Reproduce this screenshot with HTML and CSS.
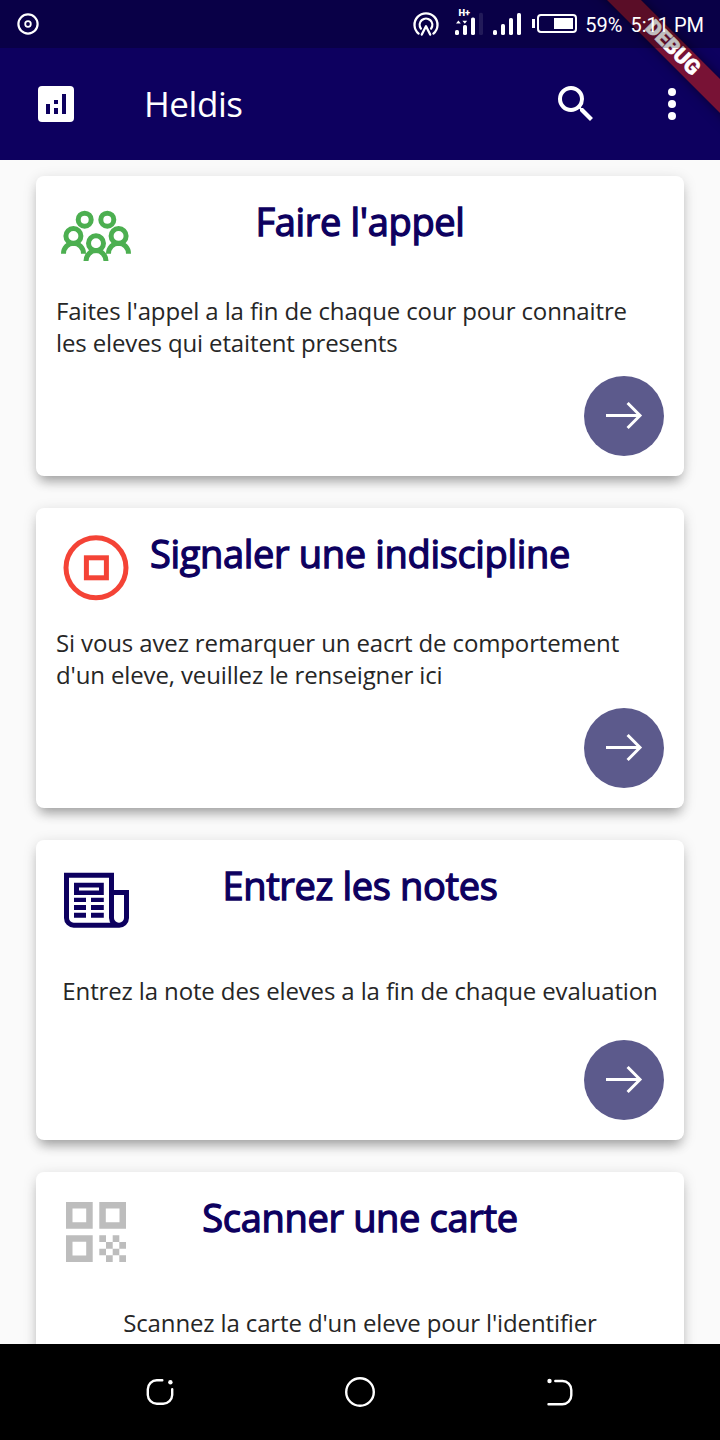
FILE: index.html
```html
<!DOCTYPE html>
<html lang="fr">
<head>
<meta charset="utf-8">
<title>Heldis</title>
<link rel="stylesheet" href="styles.css">
</head>
<body>
<div class="screen">
  <header class="top">
    <div class="debug"><span>DEBUG</span></div>
    <div class="status">
      <svg class="status-app" width="24" height="24" viewBox="0 0 24 24" fill="none" stroke="#fff"><circle cx="12" cy="12" r="9.6" stroke-width="2.2"/><circle cx="12" cy="12" r="2.8" stroke-width="1.8"/></svg>
      <div class="status-right">
        <svg width="180" height="48" viewBox="400 0 180 48">
          <g fill="none" stroke="#fff" stroke-width="2.3" stroke-linecap="round">
            <path d="M418.6 33.6A11.5 11.5 0 1 1 433.4 33.6"/>
            <path d="M420.9 28.6A6.3 6.3 0 1 1 431.1 28.6"/>
            <path d="M421.8 34.6L426 26.2L430.2 34.6" stroke-linejoin="round"/>
          </g>
          <text class="net" x="458.4" y="15.6" textLength="11.6" lengthAdjust="spacingAndGlyphs">H+</text>
          <g fill="#fff">
            <path d="M456 23.5L458.4 20.5L460.8 23.5ZM462.4 20.8H467.2L464.8 23.8Z"/>
            <rect x="455" y="30" width="4" height="5" rx="1.6"/>
            <rect x="463" y="25" width="4" height="10" rx="1.6"/>
            <rect x="471" y="17.6" width="4" height="17.4" rx="1.6"/>
            <rect x="479" y="12.8" width="4" height="22.2" rx="1.6" opacity=".1"/>
            <rect x="493" y="30" width="4" height="5" rx="1.6"/>
            <rect x="501" y="24" width="4" height="11" rx="1.6"/>
            <rect x="509" y="18" width="4" height="17" rx="1.6"/>
            <rect x="517" y="13" width="4" height="22" rx="1.6"/>
            <rect x="532" y="19" width="3" height="9"/>
            <rect x="554" y="18" width="19" height="11"/>
          </g>
          <rect x="538" y="15" width="38" height="17" rx="3" fill="none" stroke="#fff" stroke-width="2"/>
        </svg>
        <span class="battery">59%</span>
        <span class="time">5:11 PM</span>
      </div>
    </div>
    <div class="appbar">
      <svg width="36" height="36" viewBox="0 0 36 36"><rect width="36" height="36" rx="4" fill="#fff"/><path fill="#0d005f" d="M8 18h4v10H8zM16 14h4v4h-4zM16 22h4v6h-4zM24 8h4v20h-4z"/></svg>
      <h1>Heldis</h1>
      <svg class="search" width="48" height="48" viewBox="0 0 24 24" fill="#fff"><path d="M15.5 14h-.79l-.28-.27A6.47 6.47 0 0 0 16 9.5 6.5 6.5 0 1 0 9.5 16c1.61 0 3.09-.59 4.23-1.57l.27.28v.79l5 4.99L20.49 19l-4.99-5zm-6 0C7.01 14 5 11.99 5 9.5S7.01 5 9.5 5 14 7.01 14 9.5 11.99 14 9.5 14z"/></svg>
      <svg width="48" height="48" viewBox="0 0 48 48" fill="#fff"><circle cx="24" cy="12" r="4"/><circle cx="24" cy="24" r="4"/><circle cx="24" cy="36" r="4"/></svg>
    </div>
  </header>

  <main class="list">
    <section class="card">
      <div class="head">
        <svg class="icon" viewBox="0 0 72 72" fill="none" stroke="#4caf50" stroke-width="5">
          <circle cx="24.7" cy="19.7" r="6.5"/><circle cx="47.3" cy="19.7" r="6.5"/>
          <circle cx="13.4" cy="36" r="7.5"/><circle cx="58.6" cy="36" r="7.5"/><circle cx="36" cy="43.3" r="7.5"/>
          <path d="M3.5 53.7a10 10.4 0 0 1 20 0M48.5 53.7a10 10.4 0 0 1 20 0M26 61a10 10.4 0 0 1 20 0"/>
        </svg>
        <h2>Faire l'appel</h2>
      </div>
      <div class="body"><p class="wide">Faites l'appel a la fin de chaque cour pour connaitre<br>les eleves qui etaitent presents</p></div>
      <div class="foot"><span class="go"><svg width="40" height="40" viewBox="0 0 40 40"><path d="M2 19.5H36M23.6 7L36 19.5L23.6 32"/></svg></span></div>
    </section>

    <section class="card">
      <div class="head">
        <svg class="icon" viewBox="0 0 72 72" fill="none" stroke="#f44336" stroke-width="5"><circle cx="36" cy="35.8" r="30"/><rect x="26.4" y="25.8" width="20" height="20"/></svg>
        <h2>Signaler une indiscipline</h2>
      </div>
      <div class="body"><p class="wide">Si vous avez remarquer un eacrt de comportement<br>d'un eleve, veuillez le renseigner ici</p></div>
      <div class="foot"><span class="go"><svg width="40" height="40" viewBox="0 0 40 40"><path d="M2 19.5H36M23.6 7L36 19.5L23.6 32"/></svg></span></div>
    </section>

    <section class="card">
      <div class="head">
        <svg class="icon" viewBox="0 0 72 72" fill="none" stroke="#0d005f" stroke-width="5">
          <path d="M51.5 28.5H66.5V54a7.3 7.3 0 0 1-7.5 7.2a7.3 7.3 0 0 1-7.5-7.2V11.2H6.5V54a7.2 7.2 0 0 0 7.2 7.2H59"/>
          <path fill="#0d005f" fill-rule="evenodd" stroke="none" d="M14 18.7H43.8V31H14zM19 23.4V26.4H39V23.4zM14 33.7H26V38H14zM31 33.7H43.8V38H31zM14 41.1H26V46H14zM31 41.1H43.8V46H31zM14 48.8H26V53.7H14zM31 48.8H43.8V53.7H31z"/>
        </svg>
        <h2>Entrez les notes</h2>
      </div>
      <div class="body"><p>Entrez la note des eleves a la fin de chaque evaluation</p></div>
      <div class="foot"><span class="go"><svg width="40" height="40" viewBox="0 0 40 40"><path d="M2 19.5H36M23.6 7L36 19.5L23.6 32"/></svg></span></div>
    </section>

    <section class="card">
      <div class="head">
        <svg class="icon" viewBox="0 0 72 72" fill="#bdbdbd" fill-rule="evenodd">
          <path d="M6 6H32.7V32.7H6zM12.5 12.5V26.2H26.2V12.5zM39.3 6H66V32.7H39.3zM45.8 12.5V26.2H59.5V12.5zM6 39.3H32.7V66H6zM12.5 45.8V59.5H26.2V45.8z"/>
          <path d="M39.3 39.3H46V46H39.3zM52.7 39.3H59.3V46H52.7zM46 46H52.7V52.7H46zM59.3 46H66V52.7H59.3zM39.3 52.7H46V59.3H39.3zM52.7 52.7H59.3V59.3H52.7zM46 59.3H52.7V66H46zM59.3 59.3H66V66H59.3z"/>
        </svg>
        <h2>Scanner une carte</h2>
      </div>
      <div class="body"><p>Scannez la carte d'un eleve pour l'identifier</p></div>
    </section>
  </main>

  <nav class="nav">
    <svg width="40" height="40" viewBox="0 0 40 40"><path d="M22.3 8.3H17A9 9 0 0 0 7.8 17.3V23A9 9 0 0 0 16.8 31.7H23.2A9 9 0 0 0 32.2 23V17.2"/><circle class="dot" cx="30.4" cy="10.3" r="2.2"/></svg>
    <svg width="40" height="40" viewBox="0 0 40 40"><circle cx="20" cy="20" r="13.8"/></svg>
    <svg width="40" height="40" viewBox="0 0 40 40"><path d="M15.3 9H22.5A9 9 0 0 1 31.3 18V23.3A9 9 0 0 1 22.3 32.3H8.5"/><circle class="dot" cx="9.5" cy="9" r="2.2"/></svg>
  </nav>
</div>
</body>
</html>
```
FILE: styles.css
```css
* { box-sizing: border-box; }
body { margin: 0; font-family: "Open Sans", sans-serif; }
h1, h2, p { margin: 0; font-weight: 400; }
svg { display: block; flex: none; }

.screen {
  width: 720px;
  height: 1440px;
  display: flex;
  flex-direction: column;
  overflow: hidden;
  background: #fafafa;
}

.top {
  position: relative;
  flex: none;
  height: 160px;
  overflow: hidden;
  background: #0d005f;
}
.debug {
  position: absolute;
  left: 572px;
  top: 36px;
  width: 200px;
  height: 24px;
  padding-left: 1px;
  transform: rotate(45deg);
  background: rgba(183, 28, 28, .63);
  box-shadow: 0 0 12px rgba(0, 0, 0, .5);
  color: #fff;
  font: 900 21px/23px Roboto, sans-serif;
  text-align: center;
  -webkit-text-stroke: .6px #fff;
}
.status {
  position: relative;
  display: flex;
  justify-content: space-between;
  align-items: center;
  height: 48px;
  padding: 0 16px;
  background: rgba(0, 0, 0, .25);
  color: #fff;
  font: 400 20px/48px Roboto, sans-serif;
}
.status-right { display: flex; align-items: center; }
.battery { margin: 2px 8px 0 5px; }
.time { margin-top: 2px; }
.net { fill: #fff; font: 900 9px Roboto, sans-serif; }

.appbar {
  display: flex;
  align-items: center;
  height: 112px;
  padding: 0 24px 0 38px;
  color: #fff;
}
.appbar h1 {
  flex: 1;
  padding-left: 70px;
  font-size: 35px;
  line-height: 48px;
  letter-spacing: -.45px;
}
.search { margin-right: 48px; }

.list {
  flex: 1;
  min-height: 0;
  overflow: hidden;
  display: flex;
  flex-direction: column;
  gap: 32px;
  padding: 16px 36px 0;
}
.card {
  flex: none;
  display: flex;
  flex-direction: column;
  height: 300px;
  padding: 0 20px 20px;
  border-radius: 8px;
  background: #fff;
  box-shadow: 0 9px 12px -4px rgba(0, 0, 0, .28), 0 3px 14px rgba(0, 0, 0, .15);
}
.head {
  display: grid;
  grid-template-columns: 72px 1fr 72px;
  height: 102px;
  padding: 24px 4px 0;
}
.icon { width: 72px; height: 72px; }
.head h2 {
  color: #0d005f;
  font-size: 38px;
  line-height: 42px;
  letter-spacing: -.34px;
  text-align: center;
  white-space: nowrap;
  -webkit-text-stroke: 1.3px #0d005f;
}
.body {
  display: flex;
  justify-content: center;
  align-items: center;
  height: 98px;
  color: #262626;
  font-size: 24px;
  line-height: 32px;
  letter-spacing: -.13px;
  white-space: nowrap;
}
.wide { width: 100%; }
.foot { display: flex; justify-content: flex-end; }
.go {
  display: flex;
  align-items: center;
  justify-content: center;
  width: 80px;
  height: 80px;
  border-radius: 50%;
  background: #5c5a8c;
}
.go path { fill: none; stroke: #fff; stroke-width: 3; }

.nav {
  flex: none;
  display: flex;
  justify-content: space-between;
  align-items: center;
  height: 96px;
  padding: 0 140px;
  background: #000;
}
.nav svg { fill: none; stroke: #fff; stroke-width: 2.4; stroke-linecap: round; }
.nav .dot { fill: #fff; stroke: none; }
```
